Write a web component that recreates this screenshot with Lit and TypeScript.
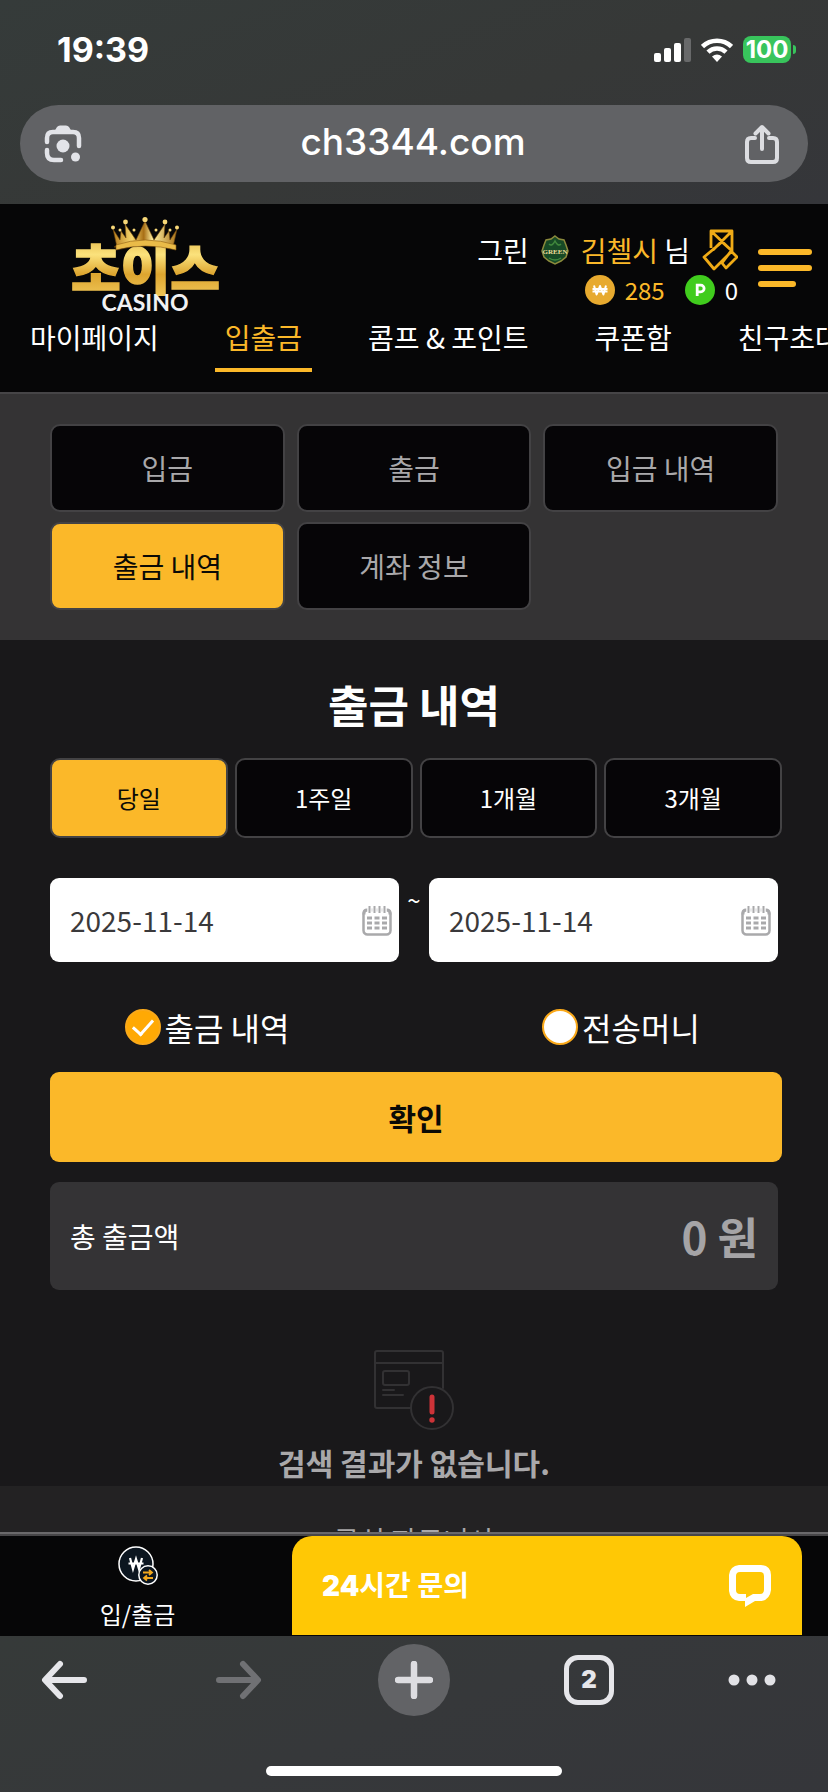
import { LitElement, html, svg, css } from "lit";
import { customElement, state } from "lit/decorators.js";

const coin = (label: string, fill: string, struck: boolean) => html`
  <svg class="coin" viewBox="0 0 30 30" aria-hidden="true">
    <circle cx="15" cy="15" r="15" fill=${fill}></circle>
    ${struck
      ? svg`<path d="M9 10.5l2.600 9 3.400-8.500 3.400 8.500 2.600-9M7.500 14h15M7.500 16.500h15" fill="none" stroke="#fff" stroke-width="2" stroke-linejoin="round"/>`
      : svg`<path d="M12.2 21V10.2h3.6a3 3 0 0 1 0 6.6h-3.4" fill="none" stroke="#fff" stroke-width="2.8"/>`}
  </svg>
`;

@customElement("app-root")
export class AppRoot extends LitElement {
  static styles = css`
    :host {
      display: flex;
      flex-direction: column;
      height: 100vh;
      overflow: hidden;
      background: #19181a;
      color: #fff;
      font-family: "Noto Sans CJK KR", "Noto Sans", sans-serif;
      font-size: 28px;
      line-height: 40px;
    }
    * { box-sizing: border-box; }
    svg { display: block; flex: none; }
    a { color: inherit; text-decoration: none; }
    button, input { font: inherit; color: inherit; margin: 0; padding: 0; border: 0; background: none; }
    button { cursor: pointer; }
    h1, p { margin: 0; }

    .device {
      flex: none;
      height: 204px;
      background: linear-gradient(160deg, #353b3a 0%, #363837 55%, #35363a 100%);
      font-family: Inter, sans-serif;
    }
    .status {
      display: flex;
      align-items: center;
      justify-content: space-between;
      height: 105px;
      padding: 0 32px 6px 57px;
    }
    .clock { font-size: 34px; font-weight: 700; }
    .signals { display: flex; align-items: center; gap: 10px; }
    .battery { display: flex; align-items: center; gap: 2px; }
    .charge {
      width: 48px;
      height: 27px;
      border-radius: 8px;
      background: #38c45c;
      font-size: 24px;
      font-weight: 700;
      line-height: 27px;
      text-align: center;
    }
    .nub { width: 3px; height: 9px; border-radius: 0 3px 3px 0; background: #38c45c; }
    .address {
      display: flex;
      align-items: center;
      justify-content: space-between;
      height: 77px;
      margin: 0 20px;
      padding: 0 28px 0 24px;
      border-radius: 39px;
      background: #616265;
    }
    .url { flex: 1; min-width: 0; padding-bottom: 4px; text-align: center; font-size: 37px; font-weight: 500; }

    .header { flex: none; background: #060607; border-bottom: 2px solid #464547; }
    .brand {
      display: flex;
      align-items: center;
      justify-content: space-between;
      height: 112px;
      padding: 8px 16px 0 68px;
    }
    .account { display: flex; align-items: center; gap: 20px; margin-top: 8px; }
    .user { display: flex; flex-direction: column; align-items: flex-end; }
    .who { display: flex; align-items: center; gap: 12px; height: 44px; }
    .money { display: flex; align-items: center; gap: 10px; height: 36px; font-size: 24px; }
    .gold { color: #fbb829; }
    .spaced { margin-right: 10px; }
    .coin { width: 30px; height: 30px; }
    .menu { display: flex; flex-direction: column; gap: 10px; width: 54px; }
    .bar { height: 6px; border-radius: 3px; background: #fbb829; }
    .short { width: 38px; }
    .nav {
      display: flex;
      gap: 46px;
      height: 76px;
      padding: 0 20px;
      overflow: hidden;
      white-space: nowrap;
    }
    .link { flex: none; height: 56px; padding: 0 10px; border-bottom: 4px solid transparent; line-height: 42px; }
    .link.on { color: #fbb829; border-color: #fbb829; }

    .scroll { flex: 1; min-height: 0; overflow: hidden; }
    .tabs {
      display: grid;
      grid-template-columns: repeat(3, 1fr);
      gap: 10px 12px;
      padding: 30px 50px;
      background: #343334;
    }
    .tab, .period {
      border: 2px solid #434244;
      border-radius: 10px;
      background: #060507;
    }
    .tab { height: 88px; color: #a9a8aa; }
    .period { height: 80px; font-size: 24px; }
    .tab.on, .period.on { background: #fbb829; color: #0b0a06; }

    .content { padding: 32px 46px 2px 50px; }
    .title { margin-right: 4px; font-size: 44px; line-height: 64px; font-weight: 700; text-align: center; }
    .periods { display: grid; grid-template-columns: repeat(4, 1fr); gap: 7px; margin-top: 22px; }
    .dates { display: flex; margin: 40px 4px 0 0; }
    .date {
      display: flex;
      align-items: center;
      flex: 1;
      min-width: 0;
      height: 84px;
      padding: 0 7px 0 20px;
      border-radius: 9px;
      background: #fff;
      color: #3a393b;
    }
    .day { flex: 1; min-width: 0; }
    .until { width: 30px; padding-top: 2px; text-align: center; font-size: 24px; }
    .kinds { display: grid; grid-template-columns: 1fr 1fr; margin: 40px -46px 20px -50px; }
    .kind {
      display: flex;
      align-items: center;
      justify-content: center;
      gap: 4px;
      height: 50px;
      font-size: 32px;
    }
    .radio {
      appearance: none;
      display: grid;
      place-items: center;
      width: 36px;
      height: 36px;
      border: 2px solid #faa91a;
      border-radius: 50%;
      background: #fff;
    }
    .radio:checked { background: #ffa904; }
    .radio:checked::before {
      content: "";
      width: 17px;
      height: 9px;
      margin-bottom: 5px;
      border: solid #fff;
      border-width: 0 0 3px 3px;
      rotate: -48deg;
    }
    .submit {
      width: 100%;
      height: 90px;
      border-radius: 9px;
      background: #fbb829;
      color: #0b0a06;
      font-size: 30px;
      font-weight: 700;
    }
    .total {
      display: flex;
      align-items: center;
      justify-content: space-between;
      height: 108px;
      margin: 20px 4px 60px 0;
      padding: 0 20px;
      border-radius: 9px;
      background: #343335;
    }
    .sum { font-size: 44px; font-weight: 700; color: #a5a4a6; }
    .empty { display: flex; flex-direction: column; align-items: center; gap: 10px; margin-right: 4px; }
    .none { font-size: 30px; line-height: 44px; font-weight: 700; color: #a9a8aa; }
    .partners { padding: 34px 50px; background: #232223; color: #a9a8aa; text-align: center; }

    .dock {
      flex: none;
      display: grid;
      grid-template-columns: 275px 1fr;
      gap: 17px;
      height: 104px;
      padding-right: 26px;
      border-top: 2px solid #6a696b;
      background: #060607;
      box-shadow: inset 0 2px #474648;
    }
    .cash {
      display: flex;
      flex-direction: column;
      align-items: center;
      padding-top: 12px;
      gap: 8px;
      font-size: 24px;
    }
    .chat {
      display: flex;
      align-items: center;
      justify-content: space-between;
      margin: 2px 0 1px;
      padding: 0 30px;
      border-radius: 20px 20px 0 0;
      background: #ffc805;
      font-family: Inter, "Noto Sans CJK KR", sans-serif;
      font-weight: 700;
    }
    .heavy { font-weight: 900; }

    .browser {
      flex: none;
      display: flex;
      flex-direction: column;
      justify-content: space-between;
      height: 156px;
      padding: 8px 28px 16px;
      background: linear-gradient(160deg, #363a39 0%, #36383a 50%, #35363a 100%);
    }
    .tools { display: grid; grid-template-columns: repeat(4, 1fr) 72px; height: 72px; align-items: center; }
    .tool {
      display: grid;
      place-items: center;
      width: 72px;
      height: 72px;
      border-radius: 50%;
    }
    .more { justify-items: start; }
    .add { background: #626366; }
    .count {
      display: grid;
      place-items: center;
      width: 50px;
      height: 50px;
      border: 5px solid #e6e6ea;
      border-radius: 14px;
      color: #e6e6ea;
      font-family: Inter, sans-serif;
      font-size: 24px;
      font-weight: 900;
    }
    .home { align-self: center; width: 296px; height: 10px; border-radius: 5px; background: #fff; }
  `;

  @state() private tab = "출금 내역";
  @state() private period = "당일";

  private calendar() {
    const rows = [15, 20, 25];
    return html`
      <svg width="30" height="31" viewBox="0 0 30 31" fill="none" stroke="#a9a9ab" aria-hidden="true">
        <rect x="1.5" y="5" width="27" height="24.500" rx="4" stroke-width="2.500"></rect>
        <path d="M2 9.500V8q0-3 3-3h20q3 0 3 3v1.500" stroke-width="3"></path>
        <path d="M7.500 1v6M12.500 1v6M17.500 1v6M22.500 1v6" stroke="#fff" stroke-width="4.500"></path>
        <path d="M7.500 1v7M12.500 1v7M17.500 1v7M22.500 1v7" stroke-width="2"></path>
        ${rows.map((y) => svg`<path d="M5 ${y - 2}h5M12.500 ${y - 2}h5M20 ${y - 2}h5" stroke-width="3"/>`)}
      </svg>
    `;
  }

  private logo() {
    return html`
      <svg width="156" height="104" viewBox="68 212 156 104" role="img" aria-label="초이스 CASINO">
        <defs>
          <linearGradient id="gold" x1="0" y1="0" x2="0" y2="1">
            <stop offset="0" stop-color="#d9a22e"></stop>
            <stop offset=".35" stop-color="#fbe27c"></stop>
            <stop offset=".6" stop-color="#dda52f"></stop>
            <stop offset="1" stop-color="#f7d367"></stop>
          </linearGradient>
          <linearGradient id="crown" x1="0" y1="0" x2="1" y2="0">
            <stop offset="0" stop-color="#b57b1b"></stop>
            <stop offset=".3" stop-color="#f8d76d"></stop>
            <stop offset=".48" stop-color="#a86f16"></stop>
            <stop offset=".62" stop-color="#fff0a0"></stop>
            <stop offset="1" stop-color="#a97118"></stop>
          </linearGradient>
        </defs>
        <text x="71" y="290" font-family="Noto Sans CJK KR, sans-serif" font-size="54" font-weight="900"
          fill="url(#gold)" stroke="url(#gold)" stroke-width="1.500">초이스</text>
        <path d="M117 247L113 229l7 11 1-9 5 7-1-14 11 16 9-19 9 19 11-16-1 14 5-7 1 9 7-11-4 18q-28-8-59 0z"
          fill="url(#crown)" stroke="#6d450c" stroke-width=".6"></path>
        <path d="M116 245q29-10 60 0v5q-31-8-60 0z" fill="#eabb48" stroke="#8c5b12" stroke-width=".6"></path>
        <g fill="#f8d878">
          <circle cx="113" cy="227.500" r="2"></circle>
          <circle cx="125.500" cy="222" r="2.400"></circle>
          <circle cx="145" cy="219.500" r="2.600"></circle>
          <circle cx="165" cy="222" r="2.400"></circle>
          <circle cx="177" cy="227.500" r="2"></circle>
          <circle cx="120" cy="230" r="1.500"></circle>
          <circle cx="156" cy="230" r="1.500"></circle>
          <circle cx="134" cy="230" r="1.500"></circle>
          <circle cx="170" cy="230" r="1.500"></circle>
        </g>
        <text x="145" y="311" text-anchor="middle" font-family="Lato, sans-serif" font-size="23" font-weight="700"
          fill="#f1f1f3">CASINO</text>
      </svg>
    `;
  }

  render() {
    const tabs = ["입금", "출금", "입금 내역", "출금 내역", "계좌 정보"];
    const periods = ["당일", "1주일", "1개월", "3개월"];
    const links = ["마이페이지", "입출금", "콤프 & 포인트", "쿠폰함", "친구초대"];
    return html`
      <div class="device">
        <div class="status">
          <span class="clock">19:39</span>
          <div class="signals">
            <svg width="37" height="24" viewBox="0 0 37 24" fill="#fff" aria-hidden="true">
              <rect x="0" y="15" width="7" height="9" rx="2"></rect>
              <rect x="10" y="10" width="7" height="14" rx="2"></rect>
              <rect x="20" y="5" width="7" height="19" rx="2"></rect>
              <rect x="30" y="0" width="7" height="24" rx="2" fill="#68696a"></rect>
            </svg>
            <svg width="32" height="24" viewBox="0 0 32 24" fill="none" stroke="#fff" aria-hidden="true">
              <path d="M1.500 8.500a21 21 0 0 1 29 0M7 14.200a13 13 0 0 1 18 0" stroke-width="4.500"></path>
              <path d="M16 24l-5-5.500q5-4 10 0z" fill="#fff" stroke="none"></path>
            </svg>
            <div class="battery"><div class="charge">100</div><div class="nub"></div></div>
          </div>
        </div>
        <div class="address">
          <svg width="38" height="38" viewBox="0 0 38 38" fill="none" stroke="#e2e3e8" stroke-width="4.500" stroke-linecap="round" aria-hidden="true">
            <path d="M3 17v-4q0-6 6-6h20q6 0 6 6v8M3 25v3q0 7 7 7h7"></path>
            <path d="M10 7l3-5q1-1.500 3-1.500h6q2 0 3 1.500l3 5z" fill="#e2e3e8" stroke="none"></path>
            <circle cx="19" cy="21" r="6.500" fill="#e2e3e8" stroke="none"></circle>
            <circle cx="31.500" cy="32" r="4.500" fill="#e2e3e8" stroke="none"></circle>
          </svg>
          <input class="url" type="text" aria-label="주소" .value=${"ch3344.com"} />
          <svg width="36" height="40" viewBox="0 0 36 40" fill="none" stroke="#dcdde1" stroke-width="4" stroke-linecap="round" stroke-linejoin="round" aria-hidden="true">
            <path d="M11 14H7q-4 0-4 4v16q0 4 4 4h22q4 0 4-4V18q0-4-4-4h-4M18 25V4M11.500 9.500L18 3l6.500 6.500"></path>
          </svg>
        </div>
      </div>

      <header class="header">
        <div class="brand">
          <a href="#">${this.logo()}</a>
          <div class="account">
            <div class="user">
              <div class="who">
                <span>그린</span>
                <svg width="28" height="30" viewBox="0 0 28 30" aria-hidden="true">
                  <path d="M14 1l4 3 5 1 2 5 2 6-2 6-5 4-6 3-6-3-5-4-2-6 2-6 2-5 5-1z" fill="#174a26" stroke="#8b8a3c" stroke-width="1.500"></path>
                  <path d="M8 9q3 3 6-3 3 6 6 3M8 23q6 4 12 0" fill="none" stroke="#41893d" stroke-width="1.500"></path>
                  <text x="14" y="19" text-anchor="middle" font-family="Liberation Serif, serif" font-size="7" font-weight="700" fill="#f0dd9a">GREEN</text>
                </svg>
                <span><span class="gold">김첼시</span> 님</span>
                <svg width="36" height="42" viewBox="0 0 36 42" fill="none" stroke="#f0ab16" stroke-width="2.800" stroke-linejoin="round" aria-hidden="true">
                  <path d="M9 19V2h21v20M9 2l21 20M30 2L11 21M12 40L2 28 20 13l10 9zM20 34l9-12 6 6-11 11z"></path>
                </svg>
              </div>
              <div class="money">
                ${coin("W", "#e7aa2f", true)}
                <span class="gold spaced">285</span>
                ${coin("P", "#40cc1d", false)}
                <span>0</span>
              </div>
            </div>
            <button class="menu" aria-label="메뉴">
              <span class="bar"></span><span class="bar"></span><span class="bar short"></span>
            </button>
          </div>
        </div>
        <nav class="nav">
          ${links.map((l) => html`<a class="link ${l === "입출금" ? "on" : ""}" href="#">${l}</a>`)}
        </nav>
      </header>

      <main class="scroll">
        <div class="tabs">
          ${tabs.map(
            (t) => html`<button class="tab ${t === this.tab ? "on" : ""}" @click=${() => (this.tab = t)}>${t}</button>`
          )}
        </div>
        <section class="content">
          <h1 class="title">출금 내역</h1>
          <div class="periods">
            ${periods.map(
              (p) =>
                html`<button class="period ${p === this.period ? "on" : ""}" @click=${() => (this.period = p)}>${p}</button>`
            )}
          </div>
          <div class="dates">
            <label class="date">
              <input class="day" type="text" aria-label="시작일" .value=${"2025-11-14"} />${this.calendar()}
            </label>
            <span class="until">~</span>
            <label class="date">
              <input class="day" type="text" aria-label="종료일" .value=${"2025-11-14"} />${this.calendar()}
            </label>
          </div>
          <div class="kinds">
            <label class="kind"><input class="radio" type="radio" name="kind" checked />출금 내역</label>
            <label class="kind"><input class="radio" type="radio" name="kind" />전송머니</label>
          </div>
          <button class="submit">확인</button>
          <div class="total"><span>총 출금액</span><span class="sum">0 원</span></div>
          <div class="empty">
            <svg width="80" height="80" viewBox="0 0 80 80" fill="none" stroke="#323133" stroke-width="2" stroke-linecap="round" aria-hidden="true">
              <path d="M37 58H3q-2 0-2-2V3q0-2 2-2h64q2 0 2 2v35M1 13h68M9 40h11M9 45h20"></path>
              <rect x="9" y="21" width="26" height="14" rx="2"></rect>
              <circle cx="58" cy="58" r="21"></circle>
              <path d="M58 47v15" stroke="#cd3338" stroke-width="5"></path>
              <circle cx="58" cy="70" r="2.700" fill="#cd3338" stroke="none"></circle>
            </svg>
            <p class="none">검색 결과가 없습니다.</p>
          </div>
        </section>
        <footer class="partners">공식 파트너사</footer>
      </main>

      <div class="dock">
        <a class="cash" href="#">
          <svg width="40" height="40" viewBox="0 0 40 40" fill="none" stroke="#fff" stroke-width="1.500" aria-hidden="true">
            <circle cx="18" cy="18" r="17" fill="#0c1620"></circle>
            <path d="M12 12l3 11 3-10 3 10 3-11M10.500 17.500h15" stroke-width="2.200"></path>
            <circle cx="30" cy="29" r="9.200" fill="#0c1620"></circle>
            <path d="M25 26.500h8.500M31 24l3 2.500-3 2.500M35 32h-8.500M29 29.500L26 32l3 2.500" stroke="#f2a81d" stroke-width="1.800"></path>
          </svg>
          입/출금
        </a>
        <button class="chat">
          <span><span class="heavy">24</span>시간 문의</span>
          <svg width="44" height="44" viewBox="0 0 44 44" fill="#fff" aria-hidden="true">
            <path fill-rule="evenodd" d="M11 1h22q10 1 10 10v15q-1 9-9 11h-7L17 43v-6h-6Q2 36 1 27V11Q2 2 11 1zM12 8q-4 0-4 4v14q0 4 4 4h6v4l7-4h7q4 0 4-4V12q0-4-4-4z"></path>
          </svg>
        </button>
      </div>

      <div class="browser">
        <div class="tools">
          <button class="tool" aria-label="뒤로">
            <svg width="46" height="40" viewBox="0 0 46 40" fill="none" stroke="#e6e6ea" stroke-width="6" stroke-linecap="round" stroke-linejoin="round"><path d="M19 4L4 20l15 16M5 20h38"></path></svg>
          </button>
          <button class="tool" aria-label="앞으로">
            <svg width="46" height="40" viewBox="0 0 46 40" fill="none" stroke="#707174" stroke-width="6" stroke-linecap="round" stroke-linejoin="round"><path d="M27 4l15 16-15 16M41 20H3"></path></svg>
          </button>
          <button class="tool add" aria-label="새 탭">
            <svg width="38" height="38" viewBox="0 0 38 38" stroke="#dddde1" stroke-width="6.500" stroke-linecap="round"><path d="M19 3v32M3 19h32"></path></svg>
          </button>
          <button class="tool" aria-label="탭 목록"><span class="count">2</span></button>
          <button class="tool more" aria-label="더보기">
            <svg width="48" height="12" viewBox="0 0 48 12" fill="#e2e2e6"><circle cx="6" cy="6" r="5.500"></circle><circle cx="24" cy="6" r="5.500"></circle><circle cx="42" cy="6" r="5.500"></circle></svg>
          </button>
        </div>
        <div class="home"></div>
      </div>
    `;
  }
}
